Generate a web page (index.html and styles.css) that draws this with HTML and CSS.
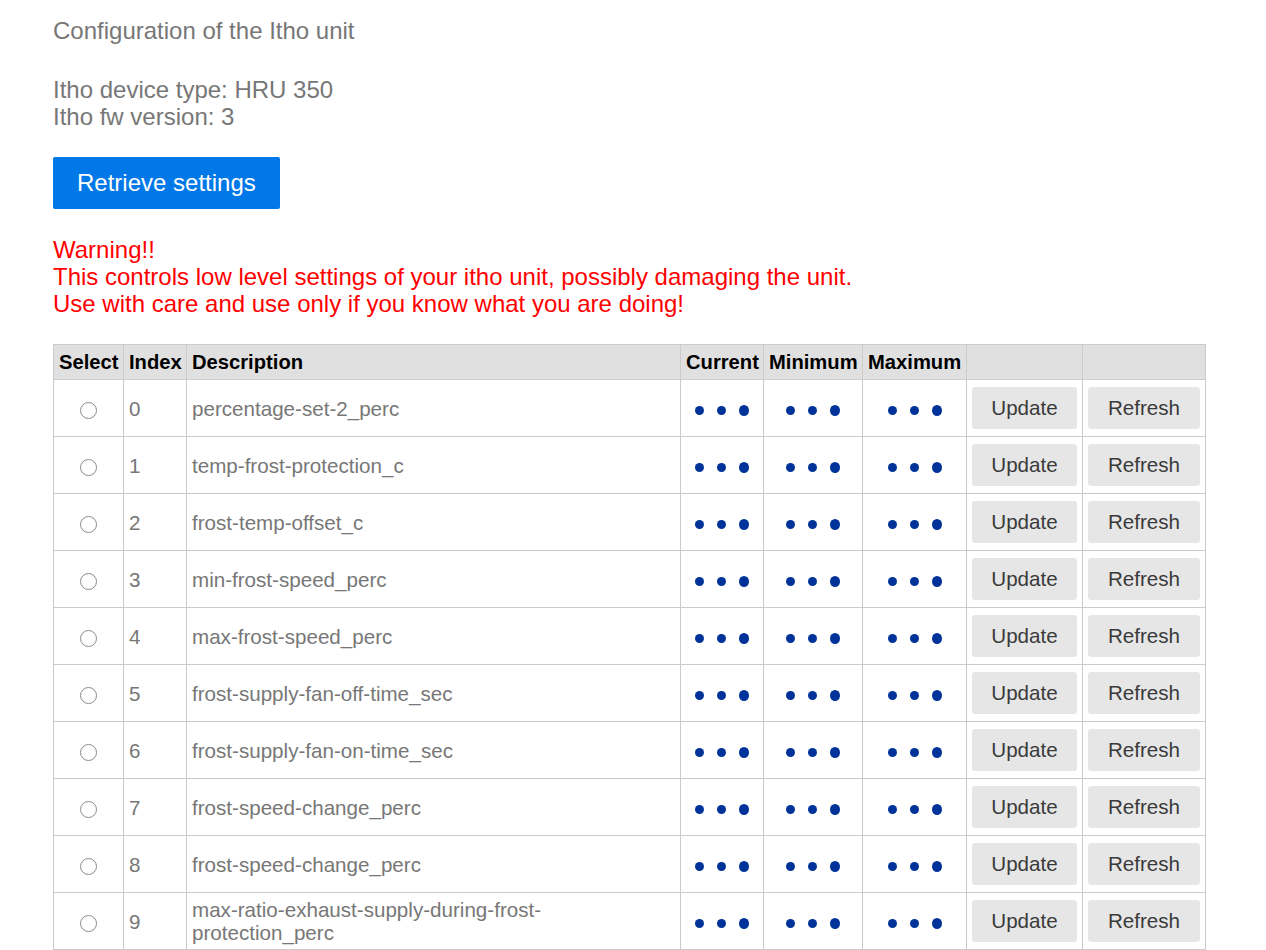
FILE: index.html
```html
<!DOCTYPE html>
<html>
<head>
<meta charset="utf-8">
<title>Itho settings</title>
<link rel="stylesheet" href="styles.css">
</head>
<body>
<div class="page">
  <div class="title">Configuration of the Itho unit</div>
  <div class="info">
    <div>Itho device type: HRU 350</div>
    <div>Itho fw version: 3</div>
  </div>
  <button class="primary">Retrieve settings</button>
  <div class="warning">
    <div>Warning!!</div>
    <div>This controls low level settings of your itho unit, possibly damaging the unit.</div>
    <div>Use with care and use only if you know what you are doing!</div>
  </div>
  <table class="settings">
    <colgroup>
      <col class="c-select"><col class="c-index"><col class="c-desc"><col class="c-cur"><col class="c-min"><col class="c-max"><col class="c-upd"><col class="c-ref">
    </colgroup>
    <thead>
      <tr><th>Select</th><th>Index</th><th>Description</th><th>Current</th><th>Minimum</th><th>Maximum</th><th></th><th></th></tr>
    </thead>
    <tbody>
      <tr><td class="sel"><input type="radio" name="sel"></td><td>0</td><td>percentage-set-2_perc</td><td class="ld"><span class="dots"><i></i><i></i><i></i></span></td><td class="ld"><span class="dots"><i></i><i></i><i></i></span></td><td class="ld"><span class="dots"><i></i><i></i><i></i></span></td><td class="btn"><button>Update</button></td><td class="btn"><button>Refresh</button></td></tr>
      <tr><td class="sel"><input type="radio" name="sel"></td><td>1</td><td>temp-frost-protection_c</td><td class="ld"><span class="dots"><i></i><i></i><i></i></span></td><td class="ld"><span class="dots"><i></i><i></i><i></i></span></td><td class="ld"><span class="dots"><i></i><i></i><i></i></span></td><td class="btn"><button>Update</button></td><td class="btn"><button>Refresh</button></td></tr>
      <tr><td class="sel"><input type="radio" name="sel"></td><td>2</td><td>frost-temp-offset_c</td><td class="ld"><span class="dots"><i></i><i></i><i></i></span></td><td class="ld"><span class="dots"><i></i><i></i><i></i></span></td><td class="ld"><span class="dots"><i></i><i></i><i></i></span></td><td class="btn"><button>Update</button></td><td class="btn"><button>Refresh</button></td></tr>
      <tr><td class="sel"><input type="radio" name="sel"></td><td>3</td><td>min-frost-speed_perc</td><td class="ld"><span class="dots"><i></i><i></i><i></i></span></td><td class="ld"><span class="dots"><i></i><i></i><i></i></span></td><td class="ld"><span class="dots"><i></i><i></i><i></i></span></td><td class="btn"><button>Update</button></td><td class="btn"><button>Refresh</button></td></tr>
      <tr><td class="sel"><input type="radio" name="sel"></td><td>4</td><td>max-frost-speed_perc</td><td class="ld"><span class="dots"><i></i><i></i><i></i></span></td><td class="ld"><span class="dots"><i></i><i></i><i></i></span></td><td class="ld"><span class="dots"><i></i><i></i><i></i></span></td><td class="btn"><button>Update</button></td><td class="btn"><button>Refresh</button></td></tr>
      <tr><td class="sel"><input type="radio" name="sel"></td><td>5</td><td>frost-supply-fan-off-time_sec</td><td class="ld"><span class="dots"><i></i><i></i><i></i></span></td><td class="ld"><span class="dots"><i></i><i></i><i></i></span></td><td class="ld"><span class="dots"><i></i><i></i><i></i></span></td><td class="btn"><button>Update</button></td><td class="btn"><button>Refresh</button></td></tr>
      <tr><td class="sel"><input type="radio" name="sel"></td><td>6</td><td>frost-supply-fan-on-time_sec</td><td class="ld"><span class="dots"><i></i><i></i><i></i></span></td><td class="ld"><span class="dots"><i></i><i></i><i></i></span></td><td class="ld"><span class="dots"><i></i><i></i><i></i></span></td><td class="btn"><button>Update</button></td><td class="btn"><button>Refresh</button></td></tr>
      <tr><td class="sel"><input type="radio" name="sel"></td><td>7</td><td>frost-speed-change_perc</td><td class="ld"><span class="dots"><i></i><i></i><i></i></span></td><td class="ld"><span class="dots"><i></i><i></i><i></i></span></td><td class="ld"><span class="dots"><i></i><i></i><i></i></span></td><td class="btn"><button>Update</button></td><td class="btn"><button>Refresh</button></td></tr>
      <tr><td class="sel"><input type="radio" name="sel"></td><td>8</td><td>frost-speed-change_perc</td><td class="ld"><span class="dots"><i></i><i></i><i></i></span></td><td class="ld"><span class="dots"><i></i><i></i><i></i></span></td><td class="ld"><span class="dots"><i></i><i></i><i></i></span></td><td class="btn"><button>Update</button></td><td class="btn"><button>Refresh</button></td></tr>
      <tr><td class="sel"><input type="radio" name="sel"></td><td>9</td><td>max-ratio-exhaust-supply-during-frost-protection_perc</td><td class="ld"><span class="dots"><i></i><i></i><i></i></span></td><td class="ld"><span class="dots"><i></i><i></i><i></i></span></td><td class="ld"><span class="dots"><i></i><i></i><i></i></span></td><td class="btn"><button>Update</button></td><td class="btn"><button>Refresh</button></td></tr>
    </tbody>
  </table>
</div>
</body>
</html>
```
FILE: styles.css
```css
html, body {
  margin: 0;
  padding: 0;
  background: #fff;
}
body {
  font-family: "Liberation Sans", Arial, sans-serif;
  color: #777;
}
.page {
  padding: 17px 0 40px 53px;
  width: 1152px;
}
.title {
  font-size: 24px;
  line-height: 28px;
}
.info {
  margin-top: 31px;
  font-size: 24px;
  line-height: 27px;
}
.primary {
  display: block;
  margin-top: 27px;
  height: 52px;
  padding: 0 24px;
  border: none;
  border-radius: 2px;
  background: #0078e7;
  color: #fff;
  font-family: "Liberation Sans", Arial, sans-serif;
  font-size: 24px;
}
.warning {
  margin-top: 27px;
  color: #ff0000;
  font-size: 24px;
  line-height: 27px;
}
.settings {
  margin-top: 27px;
  width: 1152px;
  table-layout: fixed;
  border-collapse: collapse;
  font-size: 20.6px;
  line-height: 23px;
  border: 1px solid #cbcbcb;
}
.c-select { width: 70px; }
.c-index { width: 63px; }
.c-desc { width: 494px; }
.c-cur { width: 83px; }
.c-min { width: 99px; }
.c-max { width: 104px; }
.c-upd { width: 116px; }
.c-ref { width: 123px; }
.settings th {
  background: #e0e0e0;
  color: #000;
  font-size: 20.2px;
  font-weight: bold;
  text-align: left;
  height: 35px;
  box-sizing: border-box;
  padding: 1px 5px 0;
  border: 1px solid #cbcbcb;
  white-space: nowrap;
  line-height: 23px;
}
.settings td {
  height: 56px;
  padding: 0 5px;
  border: 1px solid #cbcbcb;
  vertical-align: middle;
  color: #777;
}
.settings td.sel {
  text-align: center;
  padding: 0;
}
.settings td.sel input {
  appearance: none;
  -webkit-appearance: none;
  display: inline-block;
  vertical-align: middle;
  margin: 0;
  width: 17px;
  height: 17px;
  border: 1px solid #8a8a8a;
  border-radius: 50%;
  background: #fff;
}
.settings td.ld {
  text-align: center;
  padding: 0;
}
.dots {
  display: inline-flex;
  align-items: center;
  gap: 13px;
  vertical-align: middle;
}
.dots i {
  display: block;
  width: 9px;
  height: 9px;
  border-radius: 50%;
  background: #003399;
}
.dots i:last-child {
  width: 10px;
  height: 11px;
}
.settings td.btn {
  padding: 0 5px;
}
.settings td.btn button {
  display: block;
  width: 100%;
  height: 42px;
  border: none;
  border-radius: 3px;
  background: #e6e6e6;
  color: #3a3a3a;
  font-family: "Liberation Sans", Arial, sans-serif;
  font-size: 20.6px;
}
```
